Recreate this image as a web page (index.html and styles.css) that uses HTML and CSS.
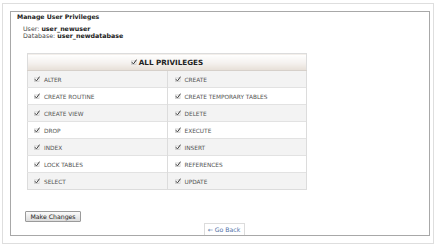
FILE: index.html
```html
<!DOCTYPE html>
<html>
<head>
<meta charset="utf-8">
<title>Manage User Privileges</title>
<link rel="stylesheet" href="styles.css">
</head>
<body>
<div class="outer">
  <div class="panel">
    <div class="title">Manage User Privileges</div>
    <div class="info">
      <div>User: <b>user_newuser</b></div>
      <div>Database: <b>user_newdatabase</b></div>
    </div>
    <table class="privs">
      <thead>
        <tr><th colspan="2"><span class="cb"><svg width="6" height="6" viewBox="0 0 6 6"><rect x="0.5" y="2" width="4.5" height="3.5" fill="#fff" stroke="#c8c8c8" stroke-width="0.8"/><path d="M1 3.2 L2.4 5 L5.6 0.6" fill="none" stroke="#333" stroke-width="1"/></svg></span>ALL PRIVILEGES</th></tr>
      </thead>
      <tbody>
        <tr class="odd"><td><span class="cb"><svg width="6" height="6" viewBox="0 0 6 6"><rect x="0.5" y="2" width="4.5" height="3.5" fill="#fff" stroke="#c8c8c8" stroke-width="0.8"/><path d="M1 3.2 L2.4 5 L5.6 0.6" fill="none" stroke="#444" stroke-width="1"/></svg></span>ALTER</td><td><span class="cb"><svg width="6" height="6" viewBox="0 0 6 6"><rect x="0.5" y="2" width="4.5" height="3.5" fill="#fff" stroke="#c8c8c8" stroke-width="0.8"/><path d="M1 3.2 L2.4 5 L5.6 0.6" fill="none" stroke="#444" stroke-width="1"/></svg></span>CREATE</td></tr>
        <tr><td><span class="cb"><svg width="6" height="6" viewBox="0 0 6 6"><rect x="0.5" y="2" width="4.5" height="3.5" fill="#fff" stroke="#c8c8c8" stroke-width="0.8"/><path d="M1 3.2 L2.4 5 L5.6 0.6" fill="none" stroke="#444" stroke-width="1"/></svg></span>CREATE ROUTINE</td><td><span class="cb"><svg width="6" height="6" viewBox="0 0 6 6"><rect x="0.5" y="2" width="4.5" height="3.5" fill="#fff" stroke="#c8c8c8" stroke-width="0.8"/><path d="M1 3.2 L2.4 5 L5.6 0.6" fill="none" stroke="#444" stroke-width="1"/></svg></span>CREATE TEMPORARY TABLES</td></tr>
        <tr class="odd"><td><span class="cb"><svg width="6" height="6" viewBox="0 0 6 6"><rect x="0.5" y="2" width="4.5" height="3.5" fill="#fff" stroke="#c8c8c8" stroke-width="0.8"/><path d="M1 3.2 L2.4 5 L5.6 0.6" fill="none" stroke="#444" stroke-width="1"/></svg></span>CREATE VIEW</td><td><span class="cb"><svg width="6" height="6" viewBox="0 0 6 6"><rect x="0.5" y="2" width="4.5" height="3.5" fill="#fff" stroke="#c8c8c8" stroke-width="0.8"/><path d="M1 3.2 L2.4 5 L5.6 0.6" fill="none" stroke="#444" stroke-width="1"/></svg></span>DELETE</td></tr>
        <tr><td><span class="cb"><svg width="6" height="6" viewBox="0 0 6 6"><rect x="0.5" y="2" width="4.5" height="3.5" fill="#fff" stroke="#c8c8c8" stroke-width="0.8"/><path d="M1 3.2 L2.4 5 L5.6 0.6" fill="none" stroke="#444" stroke-width="1"/></svg></span>DROP</td><td><span class="cb"><svg width="6" height="6" viewBox="0 0 6 6"><rect x="0.5" y="2" width="4.5" height="3.5" fill="#fff" stroke="#c8c8c8" stroke-width="0.8"/><path d="M1 3.2 L2.4 5 L5.6 0.6" fill="none" stroke="#444" stroke-width="1"/></svg></span>EXECUTE</td></tr>
        <tr class="odd"><td><span class="cb"><svg width="6" height="6" viewBox="0 0 6 6"><rect x="0.5" y="2" width="4.5" height="3.5" fill="#fff" stroke="#c8c8c8" stroke-width="0.8"/><path d="M1 3.2 L2.4 5 L5.6 0.6" fill="none" stroke="#444" stroke-width="1"/></svg></span>INDEX</td><td><span class="cb"><svg width="6" height="6" viewBox="0 0 6 6"><rect x="0.5" y="2" width="4.5" height="3.5" fill="#fff" stroke="#c8c8c8" stroke-width="0.8"/><path d="M1 3.2 L2.4 5 L5.6 0.6" fill="none" stroke="#444" stroke-width="1"/></svg></span>INSERT</td></tr>
        <tr><td><span class="cb"><svg width="6" height="6" viewBox="0 0 6 6"><rect x="0.5" y="2" width="4.5" height="3.5" fill="#fff" stroke="#c8c8c8" stroke-width="0.8"/><path d="M1 3.2 L2.4 5 L5.6 0.6" fill="none" stroke="#444" stroke-width="1"/></svg></span>LOCK TABLES</td><td><span class="cb"><svg width="6" height="6" viewBox="0 0 6 6"><rect x="0.5" y="2" width="4.5" height="3.5" fill="#fff" stroke="#c8c8c8" stroke-width="0.8"/><path d="M1 3.2 L2.4 5 L5.6 0.6" fill="none" stroke="#444" stroke-width="1"/></svg></span>REFERENCES</td></tr>
        <tr class="odd"><td><span class="cb"><svg width="6" height="6" viewBox="0 0 6 6"><rect x="0.5" y="2" width="4.5" height="3.5" fill="#fff" stroke="#c8c8c8" stroke-width="0.8"/><path d="M1 3.2 L2.4 5 L5.6 0.6" fill="none" stroke="#444" stroke-width="1"/></svg></span>SELECT</td><td><span class="cb"><svg width="6" height="6" viewBox="0 0 6 6"><rect x="0.5" y="2" width="4.5" height="3.5" fill="#fff" stroke="#c8c8c8" stroke-width="0.8"/><path d="M1 3.2 L2.4 5 L5.6 0.6" fill="none" stroke="#444" stroke-width="1"/></svg></span>UPDATE</td></tr>
      </tbody>
    </table>
    <div class="actions"><button class="btn">Make Changes</button></div>
    <div class="back-wrap"><a class="back" href="#">&larr; Go Back</a></div>
  </div>
</div>
</body>
</html>
```

FILE: styles.css
```css
* { box-sizing: border-box; }
html, body { margin: 0; padding: 0; background: #fff; }
body { font-family: "DejaVu Sans", Verdana, sans-serif; color: #333; }

.outer {
  margin: 3px 0 0 2px;
  width: 432px;
  height: 241px;
  border: 1px solid #dedede;
  padding: 7px 0 0 7px;
}

.panel {
  width: 420px;
  height: 225px;
  border: 1px solid #a8a8a8;
  display: flex;
  flex-direction: column;
  align-items: flex-start;
}

.title {
  font-size: 6.2px;
  font-weight: bold;
  color: #222;
  line-height: 8px;
  margin: 1px 0 0 6px;
}

.info {
  font-size: 6.3px;
  line-height: 7px;
  color: #444;
  margin: 4px 0 0 12px;
}
.info b { color: #222; }

.privs {
  margin: 14px 0 0 16px;
  width: 280px;
  border-collapse: collapse;
  border: 1px solid #dcdcdc;
  table-layout: fixed;
}
.privs th {
  height: 17px;
  padding: 0;
  font-size: 7.2px;
  font-weight: bold;
  color: #222;
  text-align: center;
  background: linear-gradient(#ffffff, #f4f1ee 55%, #e6ded6);
  border-bottom: 1px solid #d6d0ca;
}
.privs td {
  height: 17px;
  padding: 0 0 0 6px;
  font-size: 5.8px;
  color: #555;
  border-top: 1px solid #e2e2e2;
  border-right: 1px solid #dcdcdc;
  white-space: nowrap;
}
.privs td + td { padding-left: 7px; }
.privs tr.odd td { background: #f3f3f3; }

.cb {
  display: inline-block;
  width: 6px;
  height: 6px;
  margin-right: 4px;
  vertical-align: -0.5px;
}
.cb svg { display: block; }
.privs th .cb { margin-right: 2px; }

.actions { margin: 14px 0 0 14px; }
.btn {
  font-family: "DejaVu Sans", Verdana, sans-serif;
  font-size: 6.2px;
  color: #222;
  height: 11px;
  width: 56px;
  padding: 0;
  border: 1px solid #9a9a9a;
  border-radius: 1px;
  background: linear-gradient(#fbfbfb, #dcdcdc);
  line-height: 9px;
}

.back-wrap {
  margin-top: auto;
  align-self: stretch;
  display: flex;
  justify-content: center;
  padding-left: 8px;
}
.back {
  display: block;
  height: 12px;
  width: 41px;
  border: 1px solid #dcdcdc;
  border-bottom: none;
  font-size: 6.2px;
  line-height: 11px;
  color: #4f72a8;
  text-decoration: none;
  text-align: center;
}
```
